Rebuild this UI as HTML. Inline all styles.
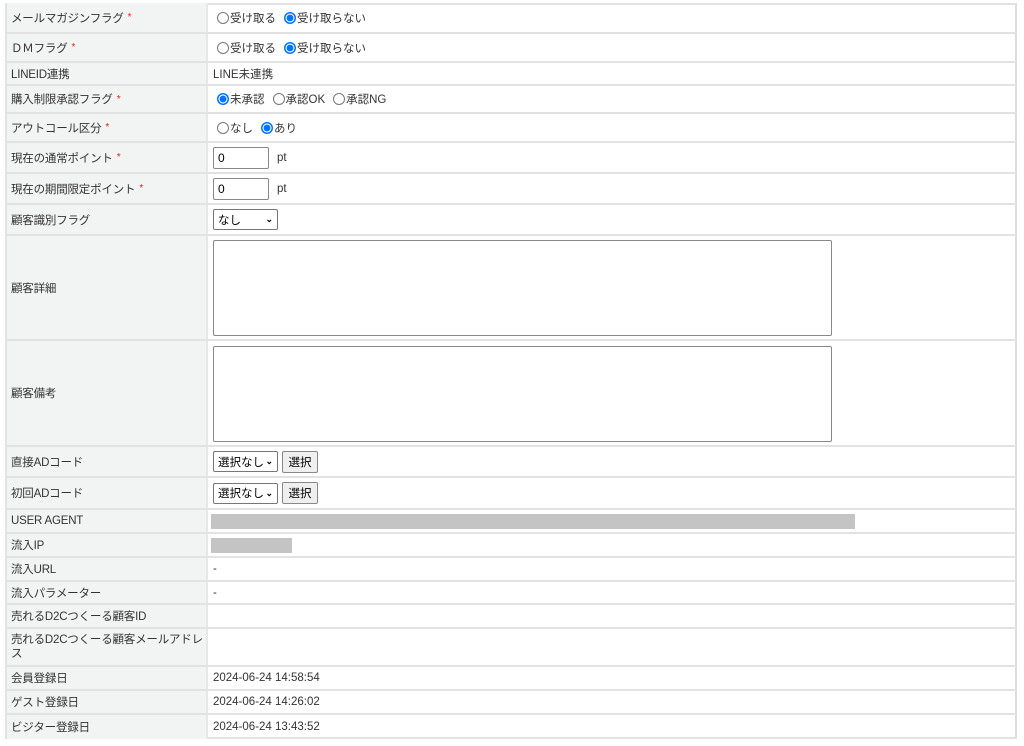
<!DOCTYPE html>
<html><head><meta charset="utf-8"><style>
*{box-sizing:border-box;margin:0;padding:0}
body{width:1024px;height:746px;background:#fff;font-family:"Liberation Sans","Noto Sans CJK JP",sans-serif;font-size:11.5px;color:#333;position:relative;overflow:hidden}
.t{position:absolute;left:5px;top:3px;width:1012px;height:736px;border:2px solid #e2e2e2;border-right:2px solid #ddd}
.r{position:absolute;left:5px;width:1012px;border-bottom:2px solid #e2e2e2;}
.l{position:absolute;left:2px;top:0;bottom:0;width:201px;background:#f2f4f3;border-right:2px solid #e6e8e7;padding-left:4px;display:flex;align-items:center;white-space:nowrap;letter-spacing:-0.2px}
.v{position:absolute;left:203px;top:0;bottom:0;right:0;display:flex;align-items:center;padding-left:5px}
.req{color:#e0201e;margin-left:4px;font-size:10px}
.rb{display:inline-block;width:12px;height:12px;border:1px solid #777;border-radius:50%;vertical-align:-2px;margin-right:1px;margin-left:4px}
.rb.on{border:1px solid #0075ff;background:radial-gradient(circle,#0075ff 0 3.2px,#fff 3.6px 4.3px,#0075ff 4.6px)}
.opt{margin-right:4px}
input.n{width:56px;height:22px;border:1px solid #888;border-radius:2px;padding-left:4px;font:12px "Liberation Sans",sans-serif;color:#000}
.sel{display:inline-flex;align-items:center;height:21px;border:1px solid #777;border-radius:2px;padding:0 4px;font-size:11.5px;color:#000;justify-content:space-between}
.btn{display:inline-flex;align-items:center;justify-content:center;height:22px;width:36px;border:1px solid #888;border-radius:2px;background:#efefef;margin-left:4px;color:#000}
.ta{position:absolute;left:5px;border:1px solid #888;border-radius:2px;width:619px}
.gray{background:#c4c4c4;height:15px}
</style></head><body>
<div class="t"></div>

<div class="r" style="top:3px;height:31px"><div class="l">メールマガジンフラグ<span class="req">*</span></div><div class="v"><span class="rb"></span><span class="opt">受け取る</span><span class="rb on"></span>受け取らない</div></div>
<div class="r" style="top:34px;height:29px"><div class="l">ＤＭフラグ<span class="req">*</span></div><div class="v"><span class="rb"></span><span class="opt">受け取る</span><span class="rb on"></span>受け取らない</div></div>
<div class="r" style="top:63px;height:23px"><div class="l">LINEID連携</div><div class="v">LINE未連携</div></div>
<div class="r" style="top:86px;height:28px"><div class="l">購入制限承認フラグ<span class="req">*</span></div><div class="v"><span class="rb on"></span><span class="opt">未承認</span><span class="rb"></span><span class="opt">承認OK</span><span class="rb"></span>承認NG</div></div>
<div class="r" style="top:114px;height:29px"><div class="l">アウトコール区分<span class="req">*</span></div><div class="v"><span class="rb"></span><span class="opt">なし</span><span class="rb on"></span>あり</div></div>
<div class="r" style="top:143px;height:31px"><div class="l">現在の通常ポイント<span class="req">*</span></div><div class="v"><input class="n" value="0"><span style="margin-left:8px">pt</span></div></div>
<div class="r" style="top:174px;height:31px"><div class="l">現在の期間限定ポイント<span class="req">*</span></div><div class="v"><input class="n" value="0"><span style="margin-left:8px">pt</span></div></div>
<div class="r" style="top:205px;height:31px"><div class="l">顧客識別フラグ</div><div class="v"><span class="sel" style="width:65px">なし<b style="font-size:9px">&#8964;</b></span></div></div>
<div class="r" style="top:236px;height:105px"><div class="l">顧客詳細</div><div class="v"><div class="ta" style="top:4px;height:96px"></div></div></div>
<div class="r" style="top:341px;height:106px"><div class="l">顧客備考</div><div class="v"><div class="ta" style="top:5px;height:96px"></div></div></div>
<div class="r" style="top:447px;height:31px"><div class="l">直接ADコード</div><div class="v"><span class="sel" style="width:65px">選択なし<b style="font-size:9px">&#8964;</b></span><span class="btn">選択</span></div></div>
<div class="r" style="top:478px;height:32px"><div class="l">初回ADコード</div><div class="v"><span class="sel" style="width:65px">選択なし<b style="font-size:9px">&#8964;</b></span><span class="btn">選択</span></div></div>
<div class="r" style="top:510px;height:24px"><div class="l">USER AGENT</div><div class="v" style="padding-left:3px"><div class="gray" style="width:644px"></div></div></div>
<div class="r" style="top:534px;height:24px"><div class="l">流入IP</div><div class="v" style="padding-left:3px"><div class="gray" style="width:81px"></div></div></div>
<div class="r" style="top:558px;height:24px"><div class="l">流入URL</div><div class="v">-</div></div>
<div class="r" style="top:582px;height:23px"><div class="l">流入パラメーター</div><div class="v">-</div></div>
<div class="r" style="top:605px;height:24px"><div class="l">売れるD2Cつくーる顧客ID</div><div class="v"></div></div>
<div class="r" style="top:629px;height:38px"><div class="l" style="line-height:14px">売れるD2Cつくーる顧客メールアドレ<br>ス</div><div class="v"></div></div>
<div class="r" style="top:667px;height:24px"><div class="l">会員登録日</div><div class="v">2024-06-24 14:58:54</div></div>
<div class="r" style="top:691px;height:24px"><div class="l">ゲスト登録日</div><div class="v">2024-06-24 14:26:02</div></div>
<div class="r" style="top:715px;height:24px;border-bottom:none"><div class="l">ビジター登録日</div><div class="v">2024-06-24 13:43:52</div></div>
</body></html>
